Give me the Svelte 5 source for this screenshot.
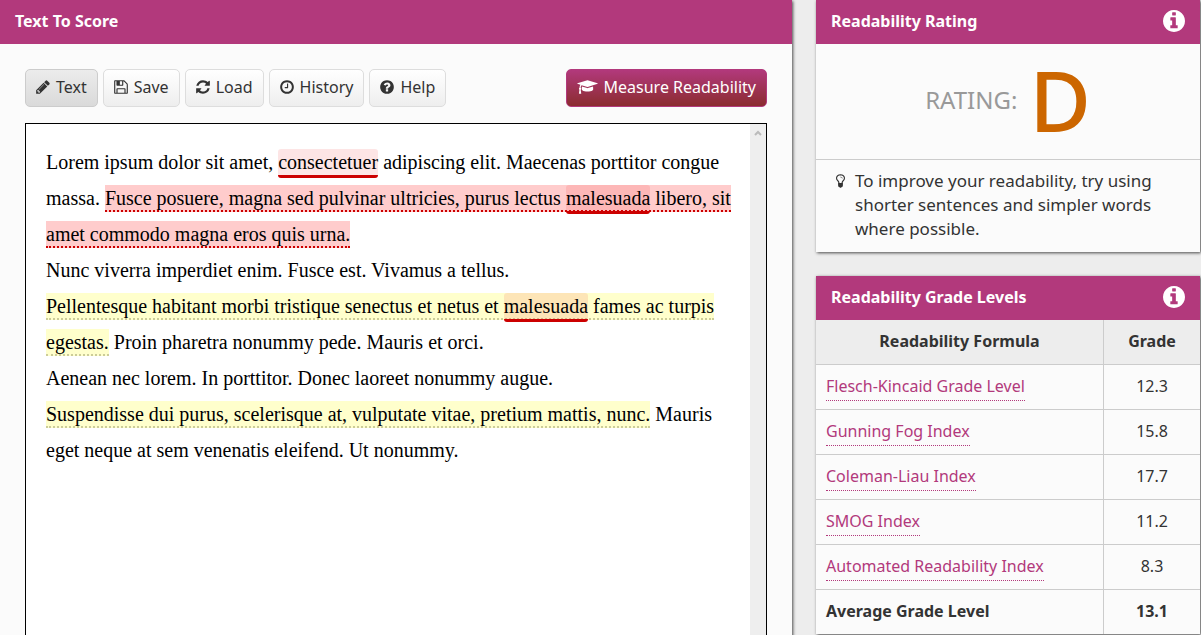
<script lang="ts">
	type Formula = { name: string; grade: string };

	const icons = {
		pencil: 'M491 1536l91-91-235-235-91 91v107h128v128h107zm523-928q0-22-22-22-10 0-17 7l-542 542q-7 7-7 17 0 22 22 22 10 0 17-7l542-542q7-7 7-17zm-54-192l416 416-832 832h-416v-416zm683 96q0 53-37 90l-166 166-416-416 166-165q36-38 90-38 53 0 91 38l235 234q37 39 37 91z',
		floppy: 'M512 1536h768v-384h-768v384zm896 0h128v-896q0-14-10-38.5t-20-34.5l-281-281q-10-10-34-20t-39-10v416q0 40-28 68t-68 28h-576q-40 0-68-28t-28-68v-416h-128v1280h128v-416q0-40 28-68t68-28h832q40 0 68 28t28 68v416zm-384-928v-320q0-13-9.5-22.5t-22.5-9.5h-192q-13 0-22.5 9.5t-9.5 22.5v320q0 13 9.5 22.5t22.5 9.5h192q13 0 22.5-9.5t9.5-22.5zm640 32v928q0 40-28 68t-68 28h-1344q-40 0-68-28t-28-68v-1344q0-40 28-68t68-28h928q40 0 88 20t76 48l280 280q28 28 48 76t20 88z',
		refresh: 'M1639 1056q0 5-1 7-64 268-268 434.5t-478 166.5q-146 0-282.5-55t-243.5-157l-129 129q-19 19-45 19t-45-19-19-45v-448q0-26 19-45t45-19h448q26 0 45 19t19 45-19 45l-137 137q71 66 161 102t187 36q134 0 250-65t186-179q11-17 53-117 8-23 30-23h192q13 0 22.5 9.5t9.5 22.5zm25-800v448q0 26-19 45t-45 19h-448q-26 0-45-19t-19-45 19-45l138-138q-148-137-349-137-134 0-250 65t-186 179q-11 17-53 117-8 23-30 23h-199q-13 0-22.5-9.5t-9.5-22.5v-7q65-268 270-434.5t480-166.5q146 0 284 55.5t245 156.5l130-129q19-19 45-19t45 19 19 45z',
		clock: 'M1024 544v448q0 14-9 23t-23 9h-320q-14 0-23-9t-9-23v-64q0-14 9-23t23-9h224v-352q0-14 9-23t23-9h64q14 0 23 9t9 23zm416 352q0-148-73-273t-198-198-273-73-273 73-198 198-73 273 73 273 198 198 273 73 273-73 198-198 73-273zm224 0q0 209-103 385.5t-279.5 279.5-385.5 103-385.5-103-279.5-279.5-103-385.5 103-385.5 279.5-279.5 385.5-103 385.5 103 279.5 279.5 103 385.5z',
		question: 'M1024 1376v-192q0-14-9-23t-23-9h-192q-14 0-23 9t-9 23v192q0 14 9 23t23 9h192q14 0 23-9t9-23zm256-672q0-88-55.5-163t-138.5-116-170-41q-243 0-371 213-15 24 8 42l132 100q7 6 19 6 16 0 25-12 53-68 86-92 34-24 86-24 48 0 85.5 26t37.5 59q0 38-20 61t-68 45q-63 28-115.5 86.5t-52.5 125.5v36q0 14 9 23t23 9h192q14 0 23-9t9-23q0-19 21.5-49.5t54.5-49.5q32-18 49-28.5t46-35 44.5-48 28-60.5 12.5-81zm384 192q0 209-103 385.5t-279.5 279.5-385.5 103-385.5-103-279.5-279.5-103-385.5 103-385.5 279.5-279.5 385.5-103 385.5 103 279.5 279.5 103 385.5z',
		info: 'M1152 1376v-160q0-14-9-23t-23-9h-96v-512q0-14-9-23t-23-9h-320q-14 0-23 9t-9 23v160q0 14 9 23t23 9h96v320h-96q-14 0-23 9t-9 23v160q0 14 9 23t23 9h448q14 0 23-9t9-23zm-128-896v-160q0-14-9-23t-23-9h-192q-14 0-23 9t-9 23v160q0 14 9 23t23 9h192q14 0 23-9t9-23zm640 416q0 209-103 385.5t-279.5 279.5-385.5 103-385.5-103-279.5-279.5-103-385.5 103-385.5 279.5-279.5 385.5-103 385.5 103 279.5 279.5 103 385.5z',
		graduation: 'M1774 836l18 316q4 69-82 128t-235 93.5-323 34.5-323-34.5-235-93.5-82-128l18-316 574 181q22 7 48 7t48-7zm530-324q0 23-22 31l-1120 352q-4 1-10 1t-10-1l-652-206q-43 34-71 111.5t-34 178.5q63 36 63 109 0 69-58 107l58 433q2 14-8 25-9 11-24 11h-192q-15 0-24-11-10-11-8-25l58-433q-58-38-58-107 0-73 65-111 11-207 98-330l-333-104q-22-8-22-31t22-31l1120-352q4-1 10-1t10 1l1120 352q22 8 22 31z',
		bulb: 'M1120 576q0 13-9.5 22.5t-22.5 9.5-22.5-9.5-9.5-22.5q0-46-54-71t-106-25q-13 0-22.5-9.5t-9.5-22.5 9.5-22.5 22.5-9.5q50 0 99.5 16t87 54 37.5 90zm160 0q0-72-34.5-134t-90-101.5-123-62-136.5-22.5-136.5 22.5-123 62-90 101.5-34.5 134q0 101 68 180 10 11 30.5 33t30.5 33q128 153 141 298h228q13-145 141-298 10-11 30.5-33t30.5-33q68-79 68-180zm128 0q0 155-103 268-45 49-74.5 87t-59.5 95.5-34 107.5q47 28 47 82 0 37-25 64 25 27 25 64 0 52-45 81 13 23 13 47 0 46-31.5 71t-77.5 25q-20 44-60 70t-87 26-87-26-60-70q-46 0-77.5-25t-31.5-71q0-24 13-47-45-29-45-81 0-37 25-64-25-27-25-64 0-54 47-82-4-50-34-107.5t-59.5-95.5-74.5-87q-103-113-103-268 0-99 44.5-184.5t117-142 164-89 186.5-32.5 186.5 32.5 164 89 117 142 44.5 184.5z'
	};

	const tools = [
		{ label: 'Text', icon: icons.pencil },
		{ label: 'Save', icon: icons.floppy },
		{ label: 'Load', icon: icons.refresh },
		{ label: 'History', icon: icons.clock },
		{ label: 'Help', icon: icons.question }
	];

	const formulas: Formula[] = [
		{ name: 'Flesch-Kincaid Grade Level', grade: '12.3' },
		{ name: 'Gunning Fog Index', grade: '15.8' },
		{ name: 'Coleman-Liau Index', grade: '17.7' },
		{ name: 'SMOG Index', grade: '11.2' },
		{ name: 'Automated Readability Index', grade: '8.3' }
	];

	let active = $state('Text');
</script>

{#snippet infoButton(label: string)}
	<button class="info" type="button" aria-label={label}>
		<svg viewBox="128 128 1536 1536"><path d={icons.info} /></svg>
	</button>
{/snippet}

<div class="page">
	<!-- Text editor -->
	<main class="panel editor-panel">
		<header class="panel-header">
			<h2>Text To Score</h2>
		</header>
		<div class="editor-body">
			<div class="toolbar">
				{#each tools as tool}
					<button
						class="btn"
						class:active={active === tool.label}
						type="button"
						onclick={() => (active = tool.label)}
					>
						<svg class="btn-icon" viewBox="128 0 1536 1792"><path d={tool.icon} /></svg>
						{tool.label}
					</button>
				{/each}
				<button class="btn btn-primary" type="button">
					<svg class="btn-icon wide" viewBox="0 0 2304 1792"><path d={icons.graduation} /></svg>
					Measure Readability
				</button>
			</div>

			<div class="editor">
				<div class="editor-text" contenteditable="true" role="textbox" aria-multiline="true" aria-label="Text to score" tabindex="0" spellcheck="false">
					<p>Lorem ipsum dolor sit amet, <span class="word">consectetuer</span> adipiscing elit. Maecenas porttitor congue massa. <span class="very-long">Fusce posuere, magna sed pulvinar ultricies, purus lectus <span class="word">malesuada</span> libero, sit amet commodo magna eros quis urna.</span></p>
					<p>Nunc viverra imperdiet enim. Fusce est. Vivamus a tellus.</p>
					<p><span class="long">Pellentesque habitant morbi tristique senectus et netus et <span class="word">malesuada</span> fames ac turpis egestas.</span> Proin pharetra nonummy pede. Mauris et orci.</p>
					<p>Aenean nec lorem. In porttitor. Donec laoreet nonummy augue.</p>
					<p><span class="long">Suspendisse dui purus, scelerisque at, vulputate vitae, pretium mattis, nunc.</span> Mauris eget neque at sem venenatis eleifend. Ut nonummy.</p>
				</div>
				<div class="scroll-track" aria-hidden="true">
					<svg viewBox="0 0 8 6"><path d="M1 5l3-3 3 3" /></svg>
				</div>
			</div>
		</div>
	</main>

	<aside class="sidebar">
		<!-- Rating -->
		<section class="panel">
			<header class="panel-header">
				<h2>Readability Rating</h2>
				{@render infoButton('About the readability rating')}
			</header>
			<div class="rating">
				<span class="rating-label">RATING:</span>
				<span class="rating-value">D</span>
			</div>
			<div class="tip">
				<svg class="tip-icon" viewBox="384 0 1024 1792"><path d={icons.bulb} /></svg>
				<p>To improve your readability, try using shorter sentences and simpler words where possible.</p>
			</div>
		</section>

		<!-- Grade levels -->
		<section class="panel">
			<header class="panel-header">
				<h2>Readability Grade Levels</h2>
				{@render infoButton('About the grade levels')}
			</header>
			<table>
				<thead>
					<tr>
						<th scope="col">Readability Formula</th>
						<th class="grade" scope="col">Grade</th>
					</tr>
				</thead>
				<tbody>
					{#each formulas as formula}
						<tr>
							<td><a href="#formula">{formula.name}</a></td>
							<td class="grade">{formula.grade}</td>
						</tr>
					{/each}
				</tbody>
				<tfoot>
					<tr>
						<td>Average Grade Level</td>
						<td class="grade">13.1</td>
					</tr>
				</tfoot>
			</table>
		</section>
	</aside>
</div>

<style>
	:global(body) {
		background: #ededed;
	}

	.page {
		display: grid;
		grid-template-columns: minmax(0, 33fr) minmax(0, 16fr);
		gap: 24px;
		height: 100vh;
		padding-right: 1px;
		box-sizing: border-box;
		overflow: hidden;
		color: #333;
		font-family: 'Lucida Grande', 'Lucida Sans Unicode', 'Noto Sans', sans-serif;
		font-size: 16px;
		line-height: 24px;
	}

	h2,
	p {
		margin: 0;
	}

	svg {
		display: block;
		fill: currentColor;
	}

	.panel {
		background: #fbfbfb;
		box-shadow: 1px 1px 3px rgba(0, 0, 0, 0.7);
	}

	.panel-header {
		display: flex;
		align-items: center;
		justify-content: space-between;
		height: 42px;
		padding: 0 15px 2px;
		background: #b2397c;
		color: #fff;
	}

	.panel-header h2 {
		font-size: 16px;
		font-weight: 700;
	}

	.info {
		padding: 0;
		border: 0;
		background: none;
		color: #fff;
		cursor: pointer;
	}

	.info svg {
		width: 22px;
		height: 22px;
	}

	.editor-panel {
		display: flex;
		flex-direction: column;
		min-height: 720px;
	}

	.editor-body {
		display: flex;
		flex: 1;
		flex-direction: column;
		gap: 16px;
		padding: 25px;
	}

	.toolbar {
		display: flex;
		gap: 5px;
	}

	.btn {
		display: flex;
		align-items: center;
		gap: 6px;
		height: 38px;
		padding: 0 10px 2px;
		border: 1px solid #ddd;
		border-radius: 5px;
		background: linear-gradient(#fff, #eee);
		color: #333;
		font: inherit;
		white-space: nowrap;
		cursor: pointer;
	}

	.btn.active {
		border-color: #ccc;
		background: linear-gradient(#ececec, #dadada);
	}

	.btn-icon {
		width: 14px;
		height: 16px;
	}

	.btn-icon.wide {
		width: 21px;
	}

	.btn-primary {
		margin-left: auto;
		border-color: #b2397c;
		background: linear-gradient(#b2397c, #8b2c2f);
		color: #fff;
	}

	.editor {
		display: flex;
		flex: 1;
		border: 1px solid #000;
		background: #fff;
	}

	.editor-text {
		flex: 1;
		padding: 20px 16px 20px 20px;
		outline: none;
		color: #000;
		font-family: Georgia, 'Liberation Serif', serif;
		font-size: 20px;
		line-height: 36px;
	}

	.word {
		padding: 2px 0;
		border-bottom: 3px solid #c00;
		border-radius: 3px;
		background: rgba(238, 0, 0, 0.1);
	}

	.very-long {
		padding: 2px 0 1px;
		border-bottom: 2px dotted #c00;
		background: #fcc;
	}

	.long {
		padding: 2px 0 1px;
		border-bottom: 2px dotted #cc9;
		background: #ffc;
	}

	.scroll-track {
		width: 16px;
		background: #eee;
	}

	.scroll-track svg {
		width: 8px;
		height: 6px;
		margin: 6px auto;
		fill: none;
		stroke: #bbb;
		stroke-width: 2;
	}

	.sidebar {
		display: flex;
		flex-direction: column;
		gap: 24px;
	}

	.rating {
		display: flex;
		align-items: center;
		justify-content: center;
		gap: 12px;
		height: 111px;
		padding-bottom: 4px;
		border-bottom: 1px solid #ccc;
	}

	.rating-label {
		color: #999;
		font-size: 24px;
	}

	.rating-value {
		color: #c60;
		font-size: 84px;
		font-weight: 500;
		line-height: 108px;
	}

	.tip {
		display: flex;
		gap: 10px;
		padding: 9px 20px 11px;
		font-size: 17px;
	}

	.tip-icon {
		flex: none;
		width: 9px;
		height: 16px;
		margin-top: 4px;
	}

	table {
		width: 100%;
		border-collapse: separate;
		border-spacing: 0;
	}

	th,
	td {
		padding: 9px 10px 11px;
		border-bottom: 1px solid #ccc;
		text-align: left;
	}

	th {
		background: #ededed;
		text-align: center;
	}

	.grade {
		width: 76px;
		border-left: 1px solid #ccc;
		text-align: center;
	}

	tfoot td {
		border-bottom: 0;
		font-weight: 700;
	}

	a {
		padding-bottom: 3px;
		border-bottom: 1px dotted #b2397c;
		color: #b2397c;
		text-decoration: none;
	}
</style>
